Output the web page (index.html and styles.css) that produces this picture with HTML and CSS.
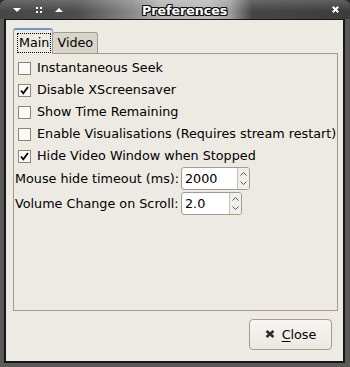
FILE: index.html
```html
<!DOCTYPE html>
<html>
<head>
<meta charset="utf-8">
<title>Preferences</title>
<link rel="stylesheet" href="styles.css">
</head>
<body>
<div class="window">
  <div class="titlebar">
    <div class="tb-left">
      <svg class="tb-icon" width="8" height="4" viewBox="0 0 8 4"><polygon points="0,0 8,0 4,4" fill="#fff"/></svg>
      <svg class="tb-icon dots" width="6" height="6" viewBox="0 0 6 6"><rect x="0" y="0" width="2" height="2" fill="#fff"/><rect x="4" y="0" width="2" height="2" fill="#fff"/><rect x="0" y="4" width="2" height="2" fill="#fff"/><rect x="4" y="4" width="2" height="2" fill="#fff"/></svg>
      <svg class="tb-icon" width="8" height="4" viewBox="0 0 8 4"><polygon points="4,0 8,4 0,4" fill="#fff"/></svg>
    </div>
    <div class="title">Preferences</div>
    <svg class="tb-close" width="7" height="7" viewBox="0 0 7 7"><path d="M0.8 0.8 L6.2 6.2 M6.2 0.8 L0.8 6.2" stroke="#fff" stroke-width="2"/></svg>
  </div>
  <div class="client">
    <div class="tabs">
      <div class="tab active"><span class="focus">Main</span></div>
      <div class="tab"><span class="tab-label">Video</span></div>
    </div>
    <div class="panel">
      <label class="check-row"><span class="box"></span><span>Instantaneous Seek</span></label>
      <label class="check-row"><span class="box"><svg width="11" height="11" viewBox="0 0 11 11"><path d="M2 5.5 L4.3 8.3 L9 2" fill="none" stroke="#000" stroke-width="1.8"/></svg></span><span>Disable XScreensaver</span></label>
      <label class="check-row"><span class="box"></span><span>Show Time Remaining</span></label>
      <label class="check-row"><span class="box"></span><span>Enable Visualisations (Requires stream restart)</span></label>
      <label class="check-row"><span class="box"><svg width="11" height="11" viewBox="0 0 11 11"><path d="M2 5.5 L4.3 8.3 L9 2" fill="none" stroke="#000" stroke-width="1.8"/></svg></span><span>Hide Video Window when Stopped</span></label>
      <div class="spin-grid">
        <span class="spin-label">Mouse hide timeout (ms):</span>
        <div class="spin wide"><span class="spin-value">2000</span><span class="spin-btns"><svg width="7" height="4" viewBox="0 0 7 4"><path d="M0.5 3.5 L3.5 0.5 L6.5 3.5" fill="none" stroke="#555" stroke-width="1"/></svg><svg width="7" height="4" viewBox="0 0 7 4"><path d="M0.5 0.5 L3.5 3.5 L6.5 0.5" fill="none" stroke="#555" stroke-width="1"/></svg></span></div>
        <span class="spin-label">Volume Change on Scroll:</span>
        <div class="spin narrow"><span class="spin-value">2.0</span><span class="spin-btns"><svg width="7" height="4" viewBox="0 0 7 4"><path d="M0.5 3.5 L3.5 0.5 L6.5 3.5" fill="none" stroke="#555" stroke-width="1"/></svg><svg width="7" height="4" viewBox="0 0 7 4"><path d="M0.5 0.5 L3.5 3.5 L6.5 0.5" fill="none" stroke="#555" stroke-width="1"/></svg></span></div>
      </div>
    </div>
    <div class="actions">
      <button class="btn"><svg width="10" height="8" viewBox="0 0 10 8"><path d="M1.5 1 L8.5 7 M8.5 1 L1.5 7" stroke="#2e2e2e" stroke-width="2.6"/></svg><span><u>C</u>lose</span></button>
    </div>
  </div>
</div>
</body>
</html>
```
FILE: styles.css
```css
html, body {
  margin: 0;
  padding: 0;
  background: #2a2a2a;
}
body {
  font-family: "DejaVu Sans", sans-serif;
  font-size: 12.75px;
  color: #000;
  white-space: nowrap;
}
.window {
  width: 350px;
  height: 367px;
  box-sizing: border-box;
  background: #5a5a5a;
  border-radius: 6px 6px 0 0;
  display: flex;
  flex-direction: column;
  overflow: hidden;
}
.titlebar {
  height: 19px;
  flex: none;
  display: flex;
  align-items: center;
  background:
    linear-gradient(to bottom, rgba(255,255,255,0.18), rgba(255,255,255,0) 60%),
    linear-gradient(to right, #474747 0%, #4c4c4c 22%, #8a8a8a 38%, #b3b3b3 46%, #b8b8b8 60%, #9a9a9a 66%, #464646 72%, #3c3c3c 100%);
  border-radius: 6px 6px 0 0;
}
.tb-left {
  display: flex;
  align-items: center;
  padding-left: 13px;
  width: 129px;
  flex: none;
}
.tb-icon { display: block; margin-right: 15px; }
.tb-icon.dots { margin-right: 13px; }
.title {
  color: #fff;
  font-weight: bold;
  font-size: 12.6px;
  text-shadow: 1px 0 0 #111, -1px 0 0 #111, 0 1px 0 #111, 0 -1px 0 #111, 1px 1px 0 #111, -1px -1px 0 #111, 1px -1px 0 #111, -1px 1px 0 #111;
  line-height: 15px;
  padding-top: 1px;
}
.tb-close {
  display: block;
  margin-left: auto;
  margin-right: 11px;
}
.client {
  flex: 1;
  margin: 0 5px 4px 4px;
  border: 2px solid #161616;
  border-top-width: 1px;
  background: #edeae3;
  display: flex;
  flex-direction: column;
  padding: 8px 5px 0 7px;
}
.tabs {
  display: flex;
  align-items: flex-end;
  flex: none;
}
.tab {
  border: 1px solid #a19b8e;
  border-bottom: none;
  border-radius: 3px 3px 0 0;
  background: #dad5ca;
  padding: 2px 4px 3px 4px;
  line-height: 15px;
  margin-left: -1px;
}
.tab.active {
  margin-left: 0;
  background: #edeae3;
  border-top: 2px solid #6d98c9;
  padding: 3px 1px 1px 3px;
  margin-bottom: -1px;
  position: relative;
  z-index: 1;
}
.focus {
  display: block;
  border: 1px dotted #000;
  padding: 1px 1px 2px 1px;
  line-height: 15px;
}
.panel {
  flex: 1;
  border: 1px solid #a19b8e;
  padding: 3px 0 0 1px;
  display: flex;
  flex-direction: column;
}
.check-row {
  height: 22px;
  display: flex;
  align-items: center;
  padding-left: 3px;
  line-height: 15px;
}
.check-row > span:last-child { padding-bottom: 2px; }
.box {
  width: 11px;
  height: 11px;
  border: 1px solid #8b867a;
  background: #fbfaf8;
  margin-right: 6px;
  flex: none;
  display: flex;
}
.box svg { display: block; }
.spin-grid {
  display: grid;
  grid-template-columns: 166px auto;
  row-gap: 2px;
  align-items: center;
  justify-items: start;
}
.spin-label {
  line-height: 15px;
  padding-bottom: 1px;
}
.spin {
  height: 21px;
  border: 1px solid #a29c8e;
  border-radius: 3px;
  background: #fff;
  display: flex;
  align-items: stretch;
  box-sizing: content-box;
}
.spin.wide { width: 67px; }
.spin.narrow { width: 59px; }
.spin-value {
  flex: 1;
  padding-left: 3px;
  line-height: 21px;
}
.spin-btns {
  width: 11px;
  border-left: 1px solid #c4bfb3;
  background: #f1efea;
  border-radius: 0 2px 2px 0;
  display: flex;
  flex-direction: column;
  align-items: center;
  justify-content: space-around;
  padding: 2px 0;
}
.spin-btns svg { display: block; }
.actions {
  flex: none;
  display: flex;
  justify-content: flex-end;
  padding: 8px 6px 11px 0;
}
.btn {
  width: 83px;
  height: 31px;
  border: 1px solid #a39d90;
  border-radius: 4px;
  background: linear-gradient(to bottom, #f7f6f3, #ebe8e1);
  font-family: "DejaVu Sans", sans-serif;
  font-size: 12.75px;
  color: #000;
  display: flex;
  align-items: center;
  justify-content: center;
  gap: 7px;
  padding: 0 0 1px 0;
}
.btn svg { display: block; }
.btn u { text-decoration: underline; text-underline-offset: 2px; }
```
